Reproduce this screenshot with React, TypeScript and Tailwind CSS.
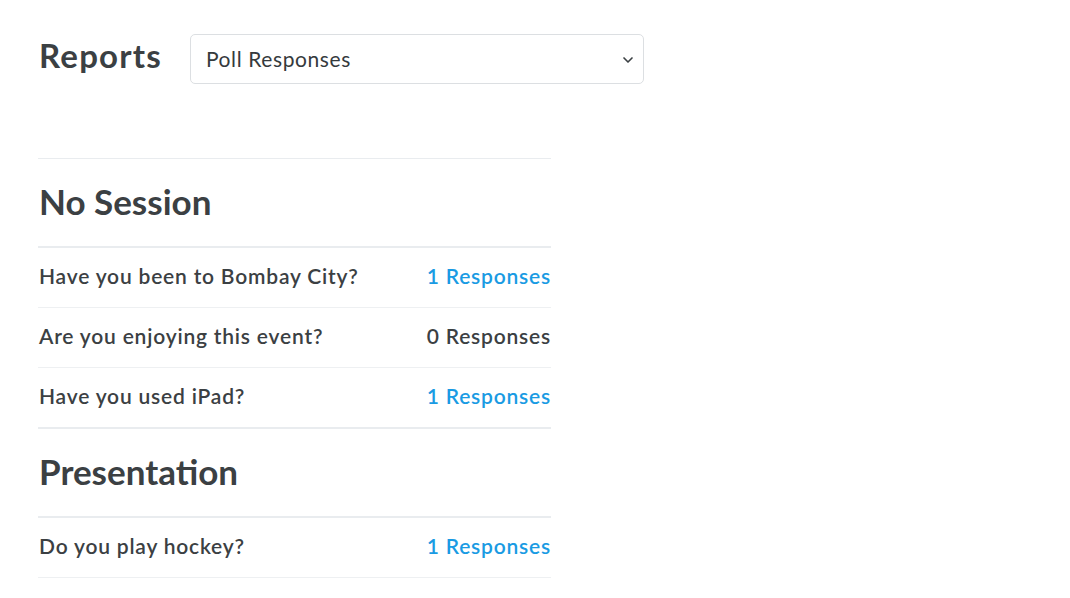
import { ChevronDown } from "lucide-react";

type Question = { text: string; count: number };

const sections: { title: string; questions: Question[] }[] = [
  {
    title: "No Session",
    questions: [
      { text: "Have you been to Bombay City?", count: 1 },
      { text: "Are you enjoying this event?", count: 0 },
      { text: "Have you used iPad?", count: 1 },
    ],
  },
  {
    title: "Presentation",
    questions: [{ text: "Do you play hockey?", count: 1 }],
  },
];

export default function App() {
  return (
    <div className="min-h-screen bg-white px-[38px] pt-[34px] text-[#3b4043] font-['Lato',sans-serif]">
      <div className="h-[50px] flex items-center gap-[28px]">
        <h1 className="text-[33px] leading-[1.2] font-bold pl-px pb-[6px] tracking-[1.2px]">Reports</h1>
        <div className="relative w-[454px] h-[50px] rounded-[5px] border border-[#dcdfe2] flex items-center pl-[15px] text-[21px] tracking-[0.6px] text-[#353a3d]">
          Poll Responses
          <ChevronDown className="absolute right-[7px] top-[17px] w-[16px] h-[16px] text-[#3b4043]" strokeWidth={2.5} />
        </div>
      </div>
      <div className="w-[513px] mt-[74px] border-t border-[#e9ecef]">
        {sections.map((s, si) => {
          const lastSection = si === sections.length - 1;
          return (
            <div key={s.title}>
              <div className="h-[89px] flex items-center pb-[2px] border-b-2 border-[#e9ecef]">
                <h2 className="text-[35px] font-bold pl-px">{s.title}</h2>
              </div>
              {s.questions.map((q, i) => {
                const thick = i === s.questions.length - 1 && !lastSection;
                return (
                  <div
                    key={q.text}
                    className={`flex items-center justify-between pb-[3px] text-[21px] font-semibold tracking-[0.8px] pl-px ${
                      thick ? "h-[61px] border-b-2 border-[#e9ecef]" : "h-[60px] border-b border-[#eef0f2]"
                    }`}
                  >
                    <span>{q.text}</span>
                    <span className={q.count > 0 ? "text-[#1a9be3]" : "text-[#3b4043]"}>
                      {q.count} Responses
                    </span>
                  </div>
                );
              })}
            </div>
          );
        })}
      </div>
    </div>
  );
}
